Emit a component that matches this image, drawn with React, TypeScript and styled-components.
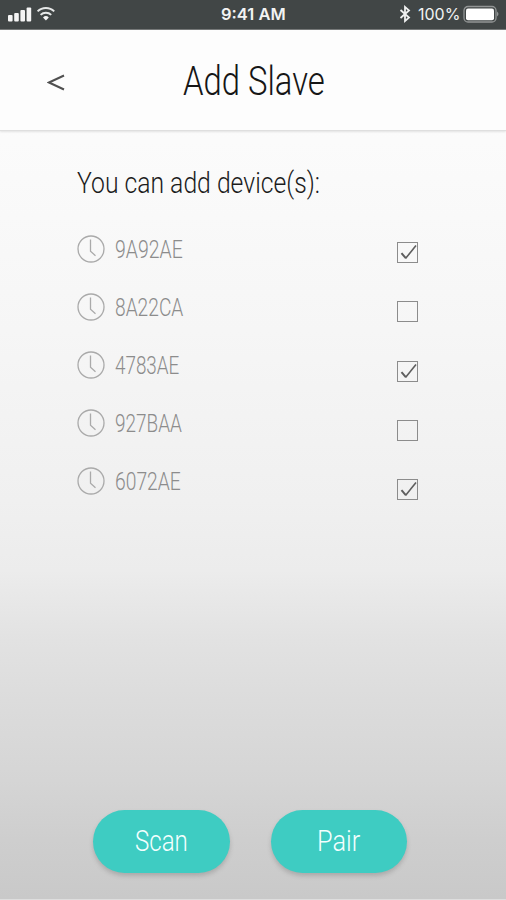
import React, { useLayoutEffect, useRef, useState } from "react";
import styled, { createGlobalStyle } from "styled-components";

const GlobalStyle = createGlobalStyle`
  * { box-sizing: border-box; }
  body { margin: 0; font-family: Roboto, "Liberation Sans", sans-serif; }
`;

const Screen = styled.main`
  width: 506px;
  height: 900px;
  display: flex;
  flex-direction: column;
  overflow: hidden;
  background: linear-gradient(#fefefe 0, #fbfbfb 140px, #f6f6f6 330px, #f0f0f0 500px, #ececec 570px, #e2e2e2 640px, #dcdcdc 700px, #d5d5d5 780px, #cecece 840px, #c9c9c9 898px);
  border-bottom: 1px solid #dedede;
`;

const StatusBar = styled.div`
  flex: none;
  height: 30px;
  padding: 0 7px 1px 8px;
  display: grid;
  grid-template-columns: 1fr auto 1fr;
  align-items: center;
  background: #414646;
  border-bottom: 1px solid #777a7a;
  color: #f2f3f3;
`;

const StatusGroup = styled.div<{ $end?: boolean }>`
  display: flex;
  align-items: center;
  justify-content: ${(p) => (p.$end ? "flex-end" : "flex-start")};
`;

const StatusText = styled.span<{ $bold?: boolean }>`
  font: ${(p) => (p.$bold ? 600 : 400)} 16px/28px Inter, sans-serif;
`;

const Header = styled.header`
  flex: none;
  height: 101px;
  display: grid;
  grid-template-columns: 183px 1fr;
  align-items: center;
  background: #fdfdfd;
  border-bottom: 1px solid #dfdfdf;
  box-shadow: 0 1px 2px rgba(0, 0, 0, 0.1);
`;

const BackButton = styled.button`
  margin: 6px 0 0 47px;
  padding: 0;
  width: 18px;
  height: 20px;
  border: 0;
  background: none;
  display: flex;
`;

const Title = styled.h1`
  margin: 4px 0 0;
  font-weight: 300;
  font-size: 40px;
  line-height: 48px;
  color: #161616;
`;

const Content = styled.section`
  flex: 1;
  padding: 34px 88px 0 77px;
`;

const Prompt = styled.h2`
  margin: 0 0 33px;
  font-weight: 300;
  font-size: 29px;
  line-height: 36px;
  color: #1c1c1c;
`;

const Columns = styled.div`
  display: flex;
  justify-content: space-between;
`;

const DeviceList = styled.ul`
  margin: 0;
  padding: 0;
  list-style: none;
`;

const DeviceRow = styled.li`
  height: 58px;
  display: flex;
  align-items: flex-start;
  gap: 10px;
  font-weight: 300;
  font-size: 26.5px;
  line-height: 30px;
  color: #8c8c8c;
`;

const ClockIcon = styled.svg`
  flex: none;
  margin-top: 1px;
`;

const CheckColumn = styled.div`
  display: flex;
  flex-direction: column;
  gap: 38.3px;
  padding-top: 8px;
`;

const Check = styled.span`
  width: 21px;
  height: 21px;
  border: 1px solid #8c8c8c;
  display: flex;
`;

const Actions = styled.footer`
  flex: none;
  display: flex;
  gap: 41px;
  padding: 0 99px 26px 93px;
`;

const ActionButton = styled.button`
  width: 136.5px;
  height: 63px;
  padding: 0 0 1px;
  border: 0;
  border-radius: 32px;
  background: #3eccc2;
  box-shadow: 0 3px 4px rgba(90, 90, 90, 0.28);
  display: flex;
  align-items: center;
  justify-content: center;
  font: 350 30px/36px Roboto, sans-serif;
  color: #f4fffe;
`;

const FitBox = styled.span`
  display: block;
  white-space: nowrap;
`;

const FitInner = styled.span`
  display: inline-block;
  transform-origin: 0 50%;
`;

/* Condenses a line of text horizontally so that it fills the given width. */
function Condensed({ width, children }: { width: number; children: string }) {
  const ref = useRef<HTMLSpanElement>(null);
  const [scale, setScale] = useState(1);
  useLayoutEffect(() => {
    if (ref.current) setScale(width / ref.current.offsetWidth);
  }, [width, children]);
  return (
    <FitBox style={{ width }}>
      <FitInner ref={ref} style={{ transform: `scaleX(${scale})` }}>{children}</FitInner>
    </FitBox>
  );
}

const devices = [
  { id: "9A92AE", width: 67.5, checked: true },
  { id: "8A22CA", width: 68, checked: false },
  { id: "4783AE", width: 64, checked: true },
  { id: "927BAA", width: 66.5, checked: false },
  { id: "6072AE", width: 65.5, checked: true },
];

export default function App() {
  return (
    <Screen>
      <GlobalStyle />
      <StatusBar>
        <StatusGroup>
          <svg width="50" height="20" viewBox="0 0 50 20" fill="#f5f5f5">
            <rect x="0" y="11" width="4.6" height="6.5" rx="1" />
            <rect x="6.2" y="9" width="4.6" height="8.5" rx="1" />
            <rect x="12.4" y="6" width="4.6" height="11.5" rx="1" />
            <rect x="18.6" y="3.5" width="4.6" height="14" rx="1" />
            <g fill="none" stroke="#e6e8e8" strokeWidth="2">
              <path d="M29.6 7.4a11.8 11.8 0 0 1 16.6 0" />
              <path d="M32.6 10.9a7.6 7.6 0 0 1 10.6 0" />
            </g>
            <path d="M35 13.4a4.2 4.2 0 0 1 5.8 0L37.9 16.4z" />
          </svg>
        </StatusGroup>
        <StatusText $bold><Condensed width={65}>9:41 AM</Condensed></StatusText>
        <StatusGroup $end>
          <svg width="19" height="18" viewBox="0 0 19 18" fill="none" stroke="#f0f1f1" strokeWidth="1.8">
            <path d="M1.5 5l8.5 7.6L6 16V2l4 3.4L1.5 13" />
          </svg>
          <StatusText><Condensed width={42}>100%</Condensed></StatusText>
          <svg width="39" height="18" viewBox="0 0 39 18">
            <rect x="4" y="1.5" width="32" height="15.5" rx="4" fill="none" stroke="#929595" strokeWidth="1.3" />
            <rect x="6" y="3.4" width="28" height="11.8" rx="2" fill="#fff" />
            <path d="M37 6.5q3 2.5 0 5z" fill="#929595" />
          </svg>
        </StatusGroup>
      </StatusBar>
      <Header>
        <BackButton aria-label="Back">
          <svg width="18" height="20" viewBox="0 0 18 20" fill="none" stroke="#505050" strokeWidth="2">
            <path d="M17 2.5L2 9.5l15 7" />
          </svg>
        </BackButton>
        <Title><Condensed width={142}>Add Slave</Condensed></Title>
      </Header>
      <Content>
        <Prompt><Condensed width={243}>You can add device(s):</Condensed></Prompt>
        <Columns>
          <DeviceList>
            {devices.map((d) => (
              <DeviceRow key={d.id}>
                <ClockIcon width="28" height="28" viewBox="0 0 28 28" fill="none" stroke="#aaa" strokeWidth="1.3">
                  <circle cx="14" cy="14" r="13" />
                  <path d="M13.5 4.5v11.8l5 4.4" />
                </ClockIcon>
                <Condensed width={d.width}>{d.id}</Condensed>
              </DeviceRow>
            ))}
          </DeviceList>
          <CheckColumn>
            {devices.map((d) => (
              <Check key={d.id} role="checkbox" aria-checked={d.checked}>
                {d.checked && (
                  <svg width="19" height="19" viewBox="0 0 19 19" fill="none" stroke="#5e5e5e">
                    <path d="M3.5 10.2l4.3 5" strokeWidth="2" />
                    <path d="M7.5 15.6L18 2.5" strokeWidth="1.6" />
                  </svg>
                )}
              </Check>
            ))}
          </CheckColumn>
        </Columns>
      </Content>
      <Actions>
        <ActionButton><Condensed width={53}>Scan</Condensed></ActionButton>
        <ActionButton><Condensed width={43}>Pair</Condensed></ActionButton>
      </Actions>
    </Screen>
  );
}
